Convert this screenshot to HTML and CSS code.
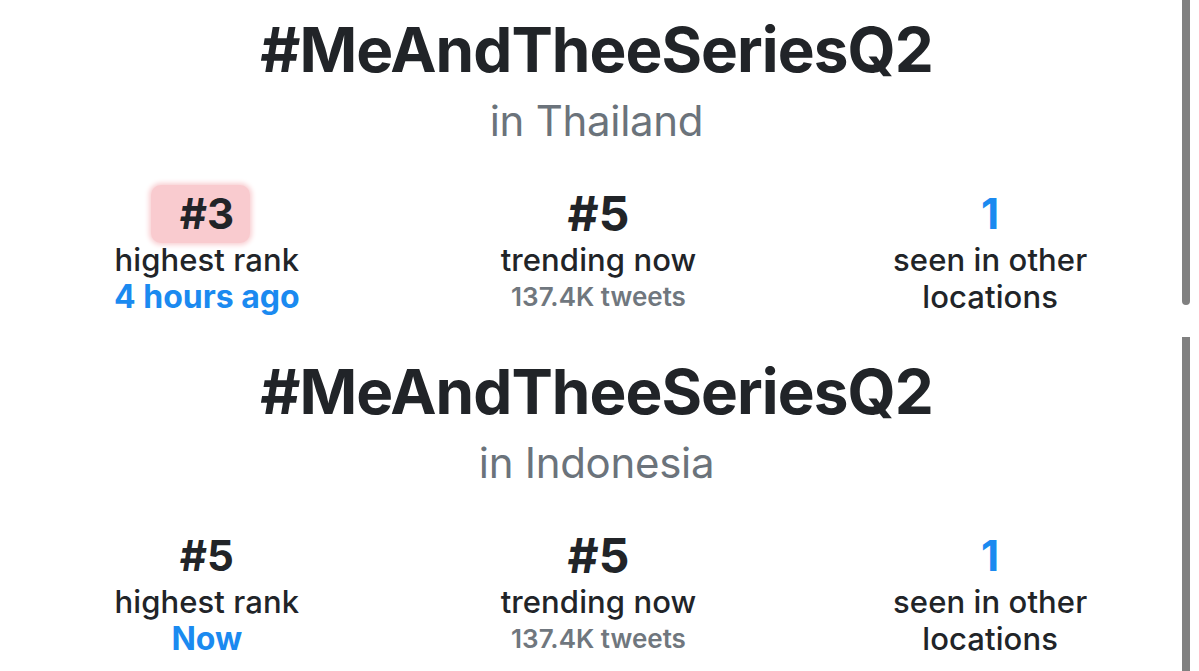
FILE: index.html
```html
<!DOCTYPE html>
<html lang="en">
<head>
    <meta charset="UTF-8">
    <title>Trend details</title>
    <link rel="stylesheet" href="styles.css">
</head>
<body>
<div class="pane pane-top">
    <div class="trend">
        <h1 class="tag">#MeAndTheeSeriesQ2</h1>
        <div class="place">in Thailand</div>
        <div class="stats">
            <div class="stat">
                <div class="num"><span class="marked">#3</span></div>
                <div class="label">highest rank</div>
                <div class="sub blue">4 hours ago</div>
            </div>
            <div class="stat">
                <div class="num big">#5</div>
                <div class="label">trending now</div>
                <div class="sub gray">137.4K tweets</div>
            </div>
            <div class="stat">
                <div class="num blue">1</div>
                <div class="label">seen in other<br>locations</div>
            </div>
        </div>
    </div>
    <div class="scroll"></div>
</div>
<div class="pane pane-bottom">
    <div class="trend">
        <h1 class="tag">#MeAndTheeSeriesQ2</h1>
        <div class="place">in Indonesia</div>
        <div class="stats">
            <div class="stat">
                <div class="num">#5</div>
                <div class="label">highest rank</div>
                <div class="sub blue">Now</div>
            </div>
            <div class="stat">
                <div class="num big">#5</div>
                <div class="label">trending now</div>
                <div class="sub gray">137.4K tweets</div>
            </div>
            <div class="stat">
                <div class="num blue">1</div>
                <div class="label">seen in other<br>locations</div>
            </div>
        </div>
    </div>
    <div class="scroll"></div>
</div>
</body>
</html>
```
FILE: styles.css
```css
body {
    margin: 0;
    background: #fff;
    font-family: Inter, "Noto Sans", sans-serif;
    color: #212428;
    width: 1199px;
    height: 671px;
    overflow: hidden;
}

.pane {
    display: flex;
}

.pane-top {
    height: 337px;
}

.pane-bottom {
    height: 334px;
}

.trend {
    flex: 1;
    padding: 0 0 0 11px;
    text-align: center;
}

.scroll {
    width: 8px;
    margin: 0 9px 0 0;
    background: #808080;
}

.pane-top .scroll {
    height: 305px;
    border-radius: 0 0 4px 4px;
}

.pane-bottom .scroll {
    height: 334px;
}

.tag {
    margin: 0;
    padding-top: 15px;
    font-size: 62px;
    line-height: 70px;
    font-weight: 700;
    letter-spacing: -0.95px;
}

.pane-bottom .tag {
    padding-top: 20px;
}

.place {
    margin-top: 10px;
    font-size: 42px;
    line-height: 52px;
    color: #6b737b;
    letter-spacing: -0.3px;
}

.stats {
    display: grid;
    grid-template-columns: repeat(3, 1fr);
    margin: 39px -4px 0 0;
}

.stat {
    display: flex;
    flex-direction: column;
    align-items: center;
}

.num {
    font-size: 42px;
    line-height: 55px;
    font-weight: 700;
}

.num.big {
    font-size: 48px;
}

.marked {
    display: block;
    margin: -1px 0 -2px -13px;
    padding: 1px 16px 2px 29px;
    background: #f9cbcf;
    border-radius: 10px;
    box-shadow: 0 0 5px 2px #f9cfd2;
}

.label {
    font-size: 31px;
    line-height: 37px;
    font-weight: 500;
    letter-spacing: 0.1px;
}

.sub {
    font-size: 32px;
    line-height: 38px;
    font-weight: 700;
}

.sub.gray {
    font-size: 26px;
    font-weight: 600;
    color: #70777e;
}

.blue {
    color: #1b8af0;
}
```
